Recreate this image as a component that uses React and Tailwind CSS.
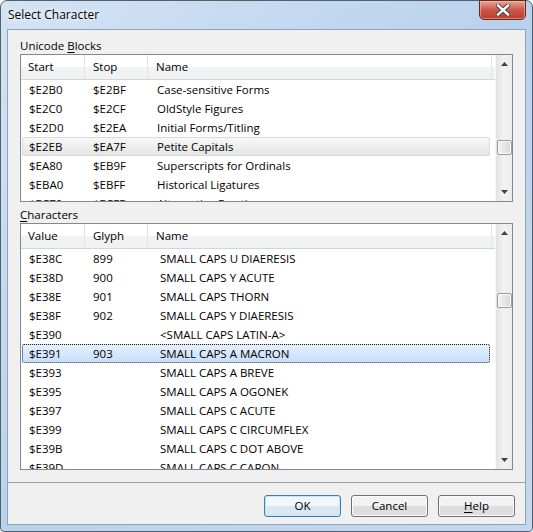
import React from "react";

const blocks = [
  ["$E2B0", "$E2BF", "Case-sensitive Forms"],
  ["$E2C0", "$E2CF", "OldStyle Figures"],
  ["$E2D0", "$E2EA", "Initial Forms/Titling"],
  ["$E2EB", "$EA7F", "Petite Capitals"],
  ["$EA80", "$EB9F", "Superscripts for Ordinals"],
  ["$EBA0", "$EBFF", "Historical Ligatures"],
  ["$EC70", "$ECFF", "Alternative Fractions"],
];

const chars = [
  ["$E38C", "899", "SMALL CAPS U DIAERESIS"],
  ["$E38D", "900", "SMALL CAPS Y ACUTE"],
  ["$E38E", "901", "SMALL CAPS THORN"],
  ["$E38F", "902", "SMALL CAPS Y DIAERESIS"],
  ["$E390", "", "<SMALL CAPS LATIN-A>"],
  ["$E391", "903", "SMALL CAPS A MACRON"],
  ["$E393", "", "SMALL CAPS A BREVE"],
  ["$E395", "", "SMALL CAPS A OGONEK"],
  ["$E397", "", "SMALL CAPS C ACUTE"],
  ["$E399", "", "SMALL CAPS C CIRCUMFLEX"],
  ["$E39B", "", "SMALL CAPS C DOT ABOVE"],
  ["$E39D", "", "SMALL CAPS C CARON"],
];

function Arrow({ up }) {
  return (
    <svg width="7" height="4" viewBox="0 0 7 4">
      {up ? <path d="M0 4 L3.5 0 L7 4 Z" fill="#404040" /> : <path d="M0 0 L3.5 4 L7 0 Z" fill="#404040" />}
    </svg>
  );
}

function ScrollBar({ thumbTop }) {
  return (
    <div className="relative w-[17px] h-full bg-gradient-to-r from-[#e3e3e3] via-[#f2f2f2] to-[#ececec] border-l border-[#f7f7f7]">
      <div className="absolute top-[7px] left-[5px] flex"><Arrow up /></div>
      <div className="absolute bottom-[7px] left-[5px] flex"><Arrow /></div>
      <div
        className="absolute left-[1px] w-[15px] h-[15px] rounded-[2px] border border-[#9a9a9a] bg-gradient-to-r from-[#f3f3f3] via-[#e6e6e6] to-[#d6d6d6] shadow-[inset_0_0_0_1px_#fafafa]"
        style={{ top: thumbTop }}
      />
    </div>
  );
}

function ListView({ headers, rows, selected, selKind, nameIndent, height, thumbTop }) {
  return (
    <div className="ml-[12px] w-[493px] border border-[#828790] bg-white flex" style={{ height }}>
      <div className="flex-1 flex flex-col overflow-hidden">
        <div className="relative h-[25px] shrink-0 flex items-center border-b border-[#d5d5d5] bg-gradient-to-b from-white from-50% to-[#f1f2f4] to-50%">
          <div className="w-[63px] pl-[7px]">{headers[0]}</div>
          <div className="w-[63px] pl-[8px] border-l border-[#e3e5e8] h-full flex items-center">{headers[1]}</div>
          <div className="flex-1 pl-[8px] border-l border-[#e3e5e8] h-full flex items-center">{headers[2]}</div>
          <div className="w-[4px] h-full border-l border-[#e3e5e8]" />
        </div>
        <div className="flex flex-col">
          {rows.map((r, i) => {
            const sel = i === selected;
            let cls = "h-[19px] shrink-0 flex items-center mx-[1px] mr-[5px] rounded-[2px] border ";
            if (sel && selKind === "gray") cls += "border-[#dadada] bg-gradient-to-b from-[#f8f8f8] to-[#e5e5e5]";
            else if (sel && selKind === "blue") cls += "border-dotted border-[#222] bg-gradient-to-b from-[#e6f0fc] to-[#c8defa]";
            else cls += "border-transparent";
            return (
              <div key={i} className={cls}>
                <div className="w-[62px] pl-[6px] whitespace-nowrap">{r[0]}</div>
                <div className="w-[63px] pl-[8px] whitespace-nowrap">{r[1]}</div>
                <div className="flex-1 whitespace-nowrap" style={{ paddingLeft: nameIndent }}>{r[2]}</div>
              </div>
            );
          })}
        </div>
      </div>
      <ScrollBar thumbTop={thumbTop} />
    </div>
  );
}

function Btn({ children, def }) {
  return (
    <div
      className={
        "w-[77px] h-[22px] rounded-[3px] border flex items-center justify-center " +
        (def
          ? "border-[#3c7fb1] bg-gradient-to-b from-[#f1f7fc] from-50% to-[#d9e7f2] to-50% shadow-[inset_0_0_0_1px_#c5e6f9]"
          : "border-[#707070] bg-gradient-to-b from-[#f2f2f2] from-50% to-[#dddddd] to-50% shadow-[inset_0_0_0_1px_#fbfbfb]")
      }
    >
      {children}
    </div>
  );
}

export default function App() {
  return (
    <div className="w-[533px] h-[532px] bg-white font-['Open_Sans',sans-serif] text-[11.5px] leading-none text-black">
      <div className="relative w-full h-full rounded-t-[7px] rounded-b-[4px] border border-[#55606e] bg-gradient-to-br from-[#d3e3f4] via-[#b9d2ec] to-[#c3d8ef] flex flex-col">
        <div className="h-[28px] shrink-0 flex items-center pl-[7px] pb-[1px] text-[12px]">
          <span className="[text-shadow:0_0_8px_#ffffff,0_0_4px_#ffffff]">Select Character</span>
        </div>
        <div className="absolute left-[478px] top-[-1px] w-[47px] h-[20px] rounded-b-[5px] border border-[#5f2a22] bg-gradient-to-b from-[#e6a595] via-[#c9554a] to-[#c23a2a] shadow-[inset_0_0_0_1px_rgba(255,200,190,0.5)] flex items-center justify-center">
          <svg width="14" height="12" viewBox="0 0 14 12">
            <path d="M2 1.5 L12 10.5 M12 1.5 L2 10.5" stroke="#3a3a3a" strokeWidth="4.2" strokeLinecap="square" />
            <path d="M2 1.5 L12 10.5 M12 1.5 L2 10.5" stroke="#ffffff" strokeWidth="2.4" strokeLinecap="square" />
          </svg>
        </div>
        <div className="mx-[6px] mb-[6px] flex-1 border border-[#8da2bb] bg-[#f0f0f0] flex flex-col">
          <div className="h-[7px]" />
          <div className="h-[17px] pl-[12px] flex items-center">
            Unicode&nbsp;<span className="underline underline-offset-2">B</span>locks
          </div>
          <ListView
            headers={["Start", "Stop", "Name"]}
            rows={blocks}
            selected={3}
            selKind="gray"
            nameIndent={9}
            height={148}
            thumbTop={85}
          />
          <div className="h-[4px]" />
          <div className="h-[17px] pl-[12px] flex items-center">
            <span className="underline underline-offset-2">C</span>haracters
          </div>
          <ListView
            headers={["Value", "Glyph", "Name"]}
            rows={chars}
            selected={5}
            selKind="blue"
            nameIndent={12}
            height={247}
            thumbTop={69}
          />
          <div className="h-[12px]" />
          <div className="h-[1px] bg-[#a0a0a0]" />
          <div className="flex-1 flex items-start justify-end gap-[10px] pr-[10px] pt-[12px]">
            <Btn def>OK</Btn>
            <Btn>Cancel</Btn>
            <Btn>
              <span><span className="underline underline-offset-2">H</span>elp</span>
            </Btn>
          </div>
        </div>
      </div>
    </div>
  );
}
